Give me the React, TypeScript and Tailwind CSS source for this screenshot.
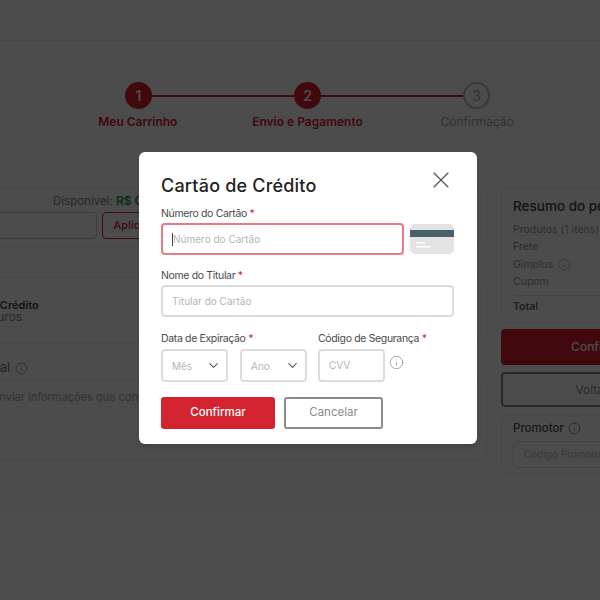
import { ChevronDown, Info, X } from "lucide-react";

function Req() {
  return <span className="text-[#d2232f]"> *</span>;
}

function FieldLabel({ text }: { text: string }) {
  return (
    <label className="block text-[10.5px] leading-[14px] tracking-[-0.35px] text-[#4a4a4a]">
      {text}
      <Req />
    </label>
  );
}

function SelectBox({ text }: { text: string }) {
  return (
    <div className="flex h-[33px] w-[67px] items-center justify-between rounded-[4px] border-2 border-[#dcdcdc] pl-[9px] pr-[5px] text-[10px] text-[#b5b5b5]">
      <span className="mt-[1px]">{text}</span>
      <ChevronDown size={15} strokeWidth={1.7} className="text-[#555]" />
    </div>
  );
}

function CardIcon() {
  return (
    <svg width="44" height="31" viewBox="0 0 44 31" className="mt-[1px] shrink-0">
      <rect width="44" height="30" rx="5" fill="#e3e3e3" />
      <rect y="6" width="44" height="7" fill="#4a5f6c" />
      <rect x="6" y="18" width="9" height="1.5" fill="#fff" />
      <rect x="6" y="22" width="14" height="1.5" fill="#fff" />
    </svg>
  );
}

function Stepper() {
  return (
    <div className="pt-[41px]">
      <div className="flex items-center pl-[125px]">
        <div className="flex h-[27px] w-[27px] items-center justify-center rounded-full bg-[#d9202c] text-[14px] font-semibold text-white">1</div>
        <div className="h-[2px] w-[142px] bg-[#d9202c]" />
        <div className="flex h-[27px] w-[27px] items-center justify-center rounded-full bg-[#d9202c] text-[14px] font-semibold text-white">2</div>
        <div className="h-[2px] w-[142px] bg-[#d9202c]" />
        <div className="flex h-[27px] w-[27px] items-center justify-center rounded-full border-2 border-[#bbb] text-[14px] text-[#aaa]">3</div>
      </div>
      <div className="mt-[6px] ml-[53px] grid w-[509px] grid-cols-3 text-center text-[12px] leading-[14px]">
        <span className="font-semibold text-[#d9202c]">Meu Carrinho</span>
        <span className="font-semibold text-[#d9202c]">Envio e Pagamento</span>
        <span className="text-[#aaa]">Confirmação</span>
      </div>
    </div>
  );
}

function LeftColumn() {
  return (
    <div className="ml-[-200px] flex w-[687px] shrink-0 flex-col text-[#888]">
      <div className="h-[60px] rounded-[4px] border border-[#eeeeee]">
        <div className="pt-[5px] pl-[252px] text-[11.5px] leading-[16px]">
          Disponível: <span className="text-[12px] font-semibold text-[#1f9d3a]">R$ 0,00</span>
        </div>
        <div className="mt-[3px] flex gap-[5px] pl-[100px]">
          <div className="h-[27px] w-[196px] rounded-[4px] border border-[#ccc]" />
          <div className="flex h-[27px] w-[60px] items-center justify-center rounded-[4px] border border-[#d9202c] text-[11px] font-medium text-[#d9202c]">Aplicar</div>
        </div>
      </div>
      <div className="mt-[30px] h-[67px] rounded-[4px] border border-[#eeeeee] pt-[21px] pl-[144px] text-[11px] leading-[12px]">
        <div className="font-semibold text-[#444]">Cartão de Crédito</div>
        <div className="text-[12px]">12x sem juros</div>
      </div>
      <div className="flex h-[36px] items-center gap-[5px] pt-[12px] pl-[77px] text-[13px] text-[#777]">
        <span>Observação adicional</span>
        <Info size={13} strokeWidth={1.2} />
      </div>
      <div className="h-[80px] rounded-[4px] border border-[#eeeeee] pt-[8px] pl-[133px] text-[11px] text-[#aaa]">
        Você pode enviar informações que considerar importantes
      </div>
    </div>
  );
}

function SummaryRow({ text, info }: { text: string; info?: boolean }) {
  return (
    <div className="flex h-[17.5px] items-center gap-[5px] text-[10.5px] text-[#999]">
      {text}
      {info && <Info size={13} strokeWidth={1.2} />}
    </div>
  );
}

function RightColumn() {
  return (
    <div className="ml-[14px] flex w-[198px] shrink-0 flex-col">
      <div className="h-[136px] rounded-[4px] border border-[#eeeeee] px-[11px] pt-[9px]">
        <h3 className="mb-[6px] text-[13.5px] leading-[18px] font-medium whitespace-nowrap text-[#444]">Resumo do pedido</h3>
        <SummaryRow text="Produtos (1 itens)" />
        <SummaryRow text="Frete" />
        <SummaryRow text="Gimplus" info />
        <SummaryRow text="Cupom" />
        <div className="mt-[4px] border-t border-[#e5e5e5] pt-[3px] text-[10.5px] font-semibold text-[#666]">Total</div>
      </div>
      <div className="mt-[6px] flex h-[36px] items-center justify-center rounded-[4px] bg-[#d9202c] text-[12px] font-medium text-white">Confirmar</div>
      <div className="mt-[7px] flex h-[35px] items-center justify-center rounded-[4px] border-2 border-[#888] pr-[16px] text-[12px] text-[#888]">Voltar</div>
      <div className="mt-[8px] h-[59px] rounded-[4px] border border-[#eeeeee] px-[11px] pt-[4px]">
        <div className="flex items-center gap-[4px] text-[11.5px] font-medium text-[#555]">
          Promotor
          <Info size={13} strokeWidth={1.2} />
        </div>
        <div className="mt-[4px] flex h-[27px] items-center rounded-[4px] border border-[#ddd] pl-[10px] text-[10px] text-[#bbb]">Código Promotor</div>
      </div>
    </div>
  );
}

function CardModal() {
  return (
    <div className="absolute inset-0 flex items-start justify-center bg-black/70 pt-[152px]">
      <div className="relative ml-[16px] h-[292px] w-[338px] rounded-[6px] bg-white px-[22px] pt-[23px] shadow-md">
        <button className="absolute top-[14px] right-[22px] text-[#555]">
          <X size={28} strokeWidth={1} />
        </button>
        <h2 className="text-[18px] leading-[22px] font-medium tracking-[0.2px] text-[#222]">Cartão de Crédito</h2>

        <div className="mt-[10px]">
          <FieldLabel text="Número do Cartão" />
          <div className="mt-[2px] flex gap-[6px]">
            <div className="flex h-[32px] w-[243px] items-center rounded-[4px] border-2 border-[#ea7a82] pl-[9px] text-[10px] text-[#b5b5b5]">
              <span className="mr-[-1px] h-[13px] w-[1px] bg-[#444]" />
              <span className="ml-[1px]">Número do Cartão</span>
            </div>
            <CardIcon />
          </div>
        </div>

        <div className="mt-[14px]">
          <FieldLabel text="Nome do Titular" />
          <div className="mt-[2px] flex h-[32px] w-[293px] items-center rounded-[4px] border-2 border-[#dcdcdc] pl-[9px] text-[10px] text-[#b5b5b5]">Titular do Cartão</div>
        </div>

        <div className="mt-[15px] flex gap-[11px]">
          <div>
            <FieldLabel text="Data de Expiração" />
            <div className="mt-[3px] flex gap-[12px]">
              <SelectBox text="Mês" />
              <SelectBox text="Ano" />
            </div>
          </div>
          <div>
            <FieldLabel text="Código de Segurança" />
            <div className="mt-[3px] flex items-center gap-[4px]">
              <div className="flex h-[33px] w-[67px] items-center rounded-[4px] border-2 border-[#dcdcdc] pl-[9px] text-[10px] text-[#b5b5b5]">CVV</div>
              <Info size={15} strokeWidth={1.2} className="mb-[7px] text-[#888]" />
            </div>
          </div>
        </div>

        <div className="mt-[15px] flex gap-[9px]">
          <button className="h-[32px] w-[114px] rounded-[3px] bg-[#d2232f] text-[11.5px] font-medium text-white">Confirmar</button>
          <button className="h-[32px] w-[99px] rounded-[3px] border-2 border-[#8a8a8a] text-[11.5px] text-[#8a8a8a]">Cancelar</button>
        </div>
      </div>
    </div>
  );
}

export default function App() {
  return (
    <div className="relative h-[600px] w-[600px] overflow-hidden bg-white font-['Inter','Noto_Sans',sans-serif]">
      <div className="h-[41px] border-b border-[#e8e8e8]" />
      <Stepper />
      <div className="mt-[58px] flex">
        <LeftColumn />
        <RightColumn />
      </div>
      <CardModal />
    </div>
  );
}
